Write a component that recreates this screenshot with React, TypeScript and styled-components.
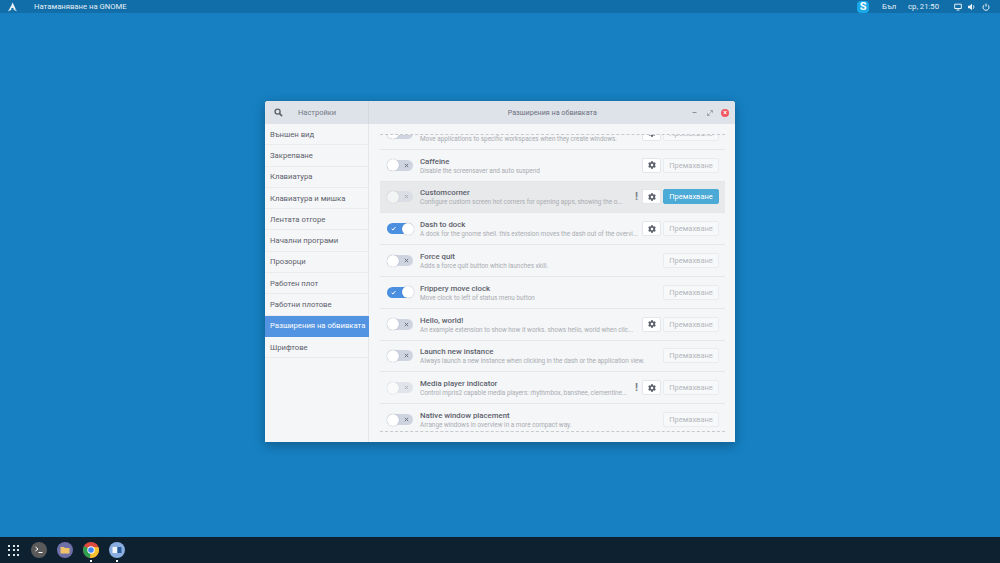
import React from "react";
import styled, { createGlobalStyle } from "styled-components";
import { FaCog } from "react-icons/fa";

const Global = createGlobalStyle`
  html, body { margin: 0; padding: 0; width: 1000px; height: 563px; overflow: hidden; }
  body { font-family: Roboto, "Noto Sans", sans-serif; }
  * { box-sizing: border-box; }
`;

const Desktop = styled.div`
  width: 1000px; height: 563px; background: #1680c2;
  display: flex; flex-direction: column;
`;
const TopBar = styled.div`
  height: 13px; background: #116ea8; color: #e8f0f6; font-size: 7.7px;
  display: flex; align-items: center; padding: 0 0 0 8px;
`;
const AppTitle = styled.span`margin-left: 17px; flex: 1;`;
const SkypeBadge = styled.span`
  width: 12px; height: 12px; border-radius: 4px; background: #19a9e8; color: #fff;
  font-size: 11px; font-weight: 700; line-height: 12px; text-align: center; margin-right: 13px;
`;
const Tray = styled.span`margin-right: 12px;`;
const TrayIcons = styled.span`display: flex; align-items: center; gap: 6px; margin-right: 10px; margin-left: 3px;`;
const Stage = styled.div`flex: 1; display: flex; justify-content: center; padding-top: 88px;`;
const Window = styled.div`
  width: 470px; height: 341px; background: #f5f6f7; border-radius: 3px 3px 0 0;
  box-shadow: 0 3px 12px rgba(0,0,0,.3); display: flex; flex-direction: column; overflow: hidden;
`;
const Header = styled.div`
  height: 23px; background: #dee2e9; display: flex; flex: none; color: #666b78; font-size: 7.5px;
`;
const HeaderLeft = styled.div`
  width: 104px; flex: none; display: flex; align-items: center; padding-left: 9px;
  border-right: 1px solid #d3d7de;
`;
const HeaderTitleText = styled.span`margin-left: 15px; color: #737885;`;
const HeaderRight = styled.div`flex: 1; display: flex; align-items: center; padding: 0 6px 0 0;`;
const CenterTitle = styled.span`flex: 1; text-align: center; padding-left: 44px; color: #6c7180; font-size: 7.2px;`;
const Controls = styled.div`display: flex; align-items: center; gap: 7px;`;
const MinGlyph = styled.svg`margin-right: 3.5px;`;
const CloseDot = styled.span`
  width: 8px; height: 8px; border-radius: 50%; background: #f2575f; color: #fff; font-size: 7px;
  line-height: 8px; text-align: center; font-weight: 700; margin-left: 1px;
`;
const Body = styled.div`flex: 1; display: flex; min-height: 0;`;
const Sidebar = styled.div`
  width: 104px; flex: none; background: #f5f6f7; border-right: 1px solid #e4e6ea;
  display: flex; flex-direction: column;
`;
const SideItem = styled.div<{ $active?: boolean }>`
  height: 21.3px; flex: none; padding-left: 5px; margin-right: -1px; display: flex; align-items: center; font-size: 7.7px;
  white-space: nowrap;
  color: ${p => (p.$active ? "#fff" : "#5c616c")};
  background: ${p => (p.$active ? "#5294e2" : "transparent")};
  border-bottom: 1px solid ${p => (p.$active ? "#5294e2" : "#e9ebee")};
`;
const Main = styled.div`flex: 1; padding: 10px 10px 11px 11px; min-width: 0;`;
const Scroller = styled.div`
  height: 298px; overflow: hidden; position: relative;
  border-top: 1px dashed #c6c9ce; border-bottom: 1px dashed #c6c9ce;
`;
const List = styled.div`margin-top: -17px;`;
const Row = styled.div<{ $hover?: boolean }>`
  height: 31.8px; display: flex; align-items: center; padding: 0 6px 0 7px;
  border-bottom: 1px solid #e4e6ea;
  background: ${p => (p.$hover ? "#e8e9ea" : "transparent")};
`;
const Toggle = styled.div<{ $on?: boolean; $dim?: boolean }>`
  width: 26px; height: 11px; border-radius: 6px; flex: none; position: relative;
  background: ${p => (p.$on ? "#4a8fe0" : "#cfd4e1")};
  opacity: ${p => (p.$dim ? 0.5 : 1)};
  color: ${p => (p.$on ? "#fff" : "#6d7280")};
`;
const Knob = styled.span<{ $on?: boolean }>`
  position: absolute; top: -0.5px; ${p => (p.$on ? "right: -0.5px;" : "left: -0.5px;")}
  width: 12px; height: 12px; border-radius: 50%; background: #fff;
  box-shadow: 0 0 1px rgba(40,60,100,.5);
`;
const ToggleMark = styled.svg<{ $on?: boolean }>`
  position: absolute; top: 3px; ${p => (p.$on ? "left: 4px;" : "right: 4px;")}
  width: 5px; height: 5px;
`;
const Info = styled.div`flex: 1; min-width: 0; margin-left: 7px; display: flex; flex-direction: column; padding-top: 1px;`;
const Name = styled.div`font-size: 7.8px; font-weight: 500; color: #5c616c; line-height: 11px; white-space: nowrap;`;
const Desc = styled.div`font-size: 6.4px; color: #a9acb3; line-height: 9px; white-space: nowrap;`;
const Warn = styled.span`font-size: 11px; font-weight: 700; color: #7b7f88; margin-right: 4px; margin-left: 4px; line-height: 11px;`;
const GearButton = styled.div`
  width: 19px; height: 15px; background: #fff; border: 1px solid #e3e5e9; border-radius: 2px; color: #5c616c;
  display: flex; align-items: center; justify-content: center; margin-right: 2px; font-size: 8px; flex: none;
`;
const RemoveButton = styled.div<{ $active?: boolean }>`
  width: 56px; height: 15px; border-radius: 2px; font-size: 7.5px; flex: none;
  display: flex; align-items: center; justify-content: center;
  background: ${p => (p.$active ? "#4baad6" : "#f7f8f9")};
  color: ${p => (p.$active ? "#fff" : "#b4b7bd")};
  border: 1px solid ${p => (p.$active ? "#4baad6" : "#e9ebee")};
`;
const Dock = styled.div`
  height: 26px; background: #0d2130; display: flex; align-items: center; padding-left: 8px; flex: none;
`;
const Grid = styled.div`
  width: 11px; display: grid; grid-template-columns: repeat(3, 2px); gap: 2.5px; margin-right: 7px;
`;
const GridDot = styled.span`width: 2px; height: 2px; background: #dfe6ea; display: block;`;
const DockSlot = styled.div`width: 26px; height: 26px; display: flex; align-items: center; justify-content: center; position: relative;`;
const Running = styled.span`
  position: absolute; bottom: 1px; left: 12px; width: 2px; height: 2px; background: #fff;
`;

const rows = [
  { n: "", d: "Move applications to specific workspaces when they create windows.", gear: true },
  { n: "Caffeine", d: "Disable the screensaver and auto suspend", gear: true },
  { n: "Customcorner", d: "Configure custom screen hot corners for opening apps, showing the o...", gear: true, warn: true, hover: true, dim: true, active: true },
  { n: "Dash to dock", d: "A dock for the gnome shell. this extension moves the dash out of the overvi...", gear: true, on: true },
  { n: "Force quit", d: "Adds a force quit button which launches xkill." },
  { n: "Frippery move clock", d: "Move clock to left of status menu button", on: true },
  { n: "Hello, world!", d: "An example extension to show how it works. shows hello, world when clic...", gear: true },
  { n: "Launch new instance", d: "Always launch a new instance when clicking in the dash or the application view." },
  { n: "Media player indicator", d: "Control mpris2 capable media players: rhythmbox, banshee, clementine...", gear: true, warn: true, dim: true },
  { n: "Native window placement", d: "Arrange windows in overview in a more compact way." },
];
const side = ["Външен вид","Закрепване","Клавиатура","Клавиатура и мишка","Лентата отгоре","Начални програми","Прозорци","Работен плот","Работни плотове","Разширения на обвивката","Шрифтове"];

export default function App() {
  return (
    <Desktop>
      <Global />
      <TopBar>
        <svg width="9" height="10" viewBox="0 0 20 20"><path d="M10 0C9 2.5 8.4 4 7.4 6.2c.6.7 1.4 1.5 2.6 2.4-1.3-.5-2.2-1.1-2.9-1.7C5.8 9.800 3.700 13.800 0 20c3-1.700 5.200-2.700 7.300-3.100-.1-.4-.2-.8-.2-1.300 0-2.400 1.300-4.200 2.900-4.100 1.600.1 2.900 1.900 2.900 4.300 0 .4-.1.800-.2 1.100 2.100.4 4.300 1.400 7.300 3.100-.6-1.100-1.200-2.100-1.700-3-.9-.7-1.800-1.600-3.700-2.600 1.300.3 2.200.7 2.900 1.100C14.500 8.600 13.800 6.500 10 0z" fill="#eef3f7"/></svg>
        <AppTitle>Натаманяване на GNOME</AppTitle>
        <SkypeBadge>S</SkypeBadge>
        <Tray>Бъл</Tray>
        <Tray>ср, 21:50</Tray>
        <TrayIcons>
          <svg width="8" height="8" viewBox="0 0 8 8"><path d="M.7 1.200h6.600v4.300H.7zM2.500 7h3" fill="none" stroke="#eaf1f6" strokeWidth="1"/></svg>
          <svg width="8" height="8" viewBox="0 0 8 8"><path d="M0 2.700h1.700L4 .8v6.400L1.700 5.300H0z" fill="#eaf1f6"/><path d="M5 2.200a2.200 2.200 0 0 1 0 3.600" fill="none" stroke="#eaf1f6" strokeWidth=".9"/></svg>
          <svg width="8" height="8" viewBox="0 0 8 8"><path d="M2.300 1.800a3 3 0 1 0 3.400 0M4 .5v3.200" fill="none" stroke="#eaf1f6" strokeWidth="1"/></svg>
        </TrayIcons>
      </TopBar>
      <Stage>
        <Window>
          <Header>
            <HeaderLeft>
              <svg width="9" height="9" viewBox="0 0 10 10"><circle cx="4" cy="4" r="2.800" fill="none" stroke="#5c616c" strokeWidth="1.500"/><path d="M6.200 6.200 9 9" stroke="#5c616c" strokeWidth="1.800"/></svg>
              <HeaderTitleText>Настройки</HeaderTitleText>
            </HeaderLeft>
            <HeaderRight>
              <CenterTitle>Разширения на обвивката</CenterTitle>
              <Controls>
                <MinGlyph width="5" height="5" viewBox="0 0 5 5"><path d="M.5 2.500h4" stroke="#8a8f9b" strokeWidth="1"/></MinGlyph>
                <svg width="6" height="6" viewBox="0 0 6 6"><path d="M3.500.5h2v2zM.5 3.500v2h2zM2 4l2-2" fill="#8a8f9b" stroke="#8a8f9b" strokeWidth=".5"/></svg>
                <CloseDot>×</CloseDot>
              </Controls>
            </HeaderRight>
          </Header>
          <Body>
            <Sidebar>
              {side.map((s, i) => <SideItem key={s} $active={i === 9}>{s}</SideItem>)}
            </Sidebar>
            <Main>
              <Scroller>
                <List>
                  {rows.map((r, i) => (
                    <Row key={i} $hover={r.hover}>
                      <Toggle $on={r.on} $dim={r.dim}>
                        <ToggleMark $on={r.on} viewBox="0 0 6 6">
                          {r.on
                            ? <path d="M.8 3.200 2.400 4.800 5.300 1.200" fill="none" stroke="currentColor" strokeWidth="1.200"/>
                            : <path d="M1 1 5 5M5 1 1 5" fill="none" stroke="currentColor" strokeWidth="1.200"/>}
                        </ToggleMark>
                        <Knob $on={r.on} />
                      </Toggle>
                      <Info>
                        <Name>{r.n || "\u00a0"}</Name>
                        <Desc>{r.d}</Desc>
                      </Info>
                      {r.warn && <Warn>!</Warn>}
                      {r.gear && <GearButton><FaCog /></GearButton>}
                      <RemoveButton $active={r.active}>Премахване</RemoveButton>
                    </Row>
                  ))}
                </List>
              </Scroller>
            </Main>
          </Body>
        </Window>
      </Stage>
      <Dock>
        <Grid>{Array.from({ length: 9 }, (_, i) => <GridDot key={i} />)}</Grid>
        <DockSlot>
          <svg width="16" height="16" viewBox="0 0 16 16"><circle cx="8" cy="8" r="8" fill="#5a5a5a"/><path d="M4.500 5 7 7 4.500 9M7.500 10.500h4" fill="none" stroke="#fff" strokeWidth="1"/></svg>
        </DockSlot>
        <DockSlot>
          <svg width="16" height="16" viewBox="0 0 16 16"><circle cx="8" cy="8" r="8" fill="#6f70a8"/><path d="M3.500 5h3.500l1 1h4.500v5.500h-9z" fill="#f0c36a"/></svg>
        </DockSlot>
        <DockSlot>
          <svg width="16" height="16" viewBox="0 0 16 16">
            <circle cx="8" cy="8" r="8" fill="#dd4b3e"/>
            <path d="M8 8 1.100 4A8 8 0 0 0 7 15.900z" fill="#2e9e4f"/>
            <path d="M8 8 7 15.900A8 8 0 0 0 15.500 5.200L8 5z" fill="#f6c232"/>
            <circle cx="8" cy="8" r="3.700" fill="#fff"/>
            <circle cx="8" cy="8" r="2.800" fill="#4285f4"/>
          </svg>
          <Running />
        </DockSlot>
        <DockSlot>
          <svg width="16" height="16" viewBox="0 0 16 16"><circle cx="8" cy="8" r="8" fill="#8aaee0"/><rect x="3.500" y="5" width="4.500" height="6" fill="#f2f5f9"/><rect x="8.500" y="5" width="4" height="6" fill="#2b5c9a"/></svg>
          <Running />
        </DockSlot>
      </Dock>
    </Desktop>
  );
}
